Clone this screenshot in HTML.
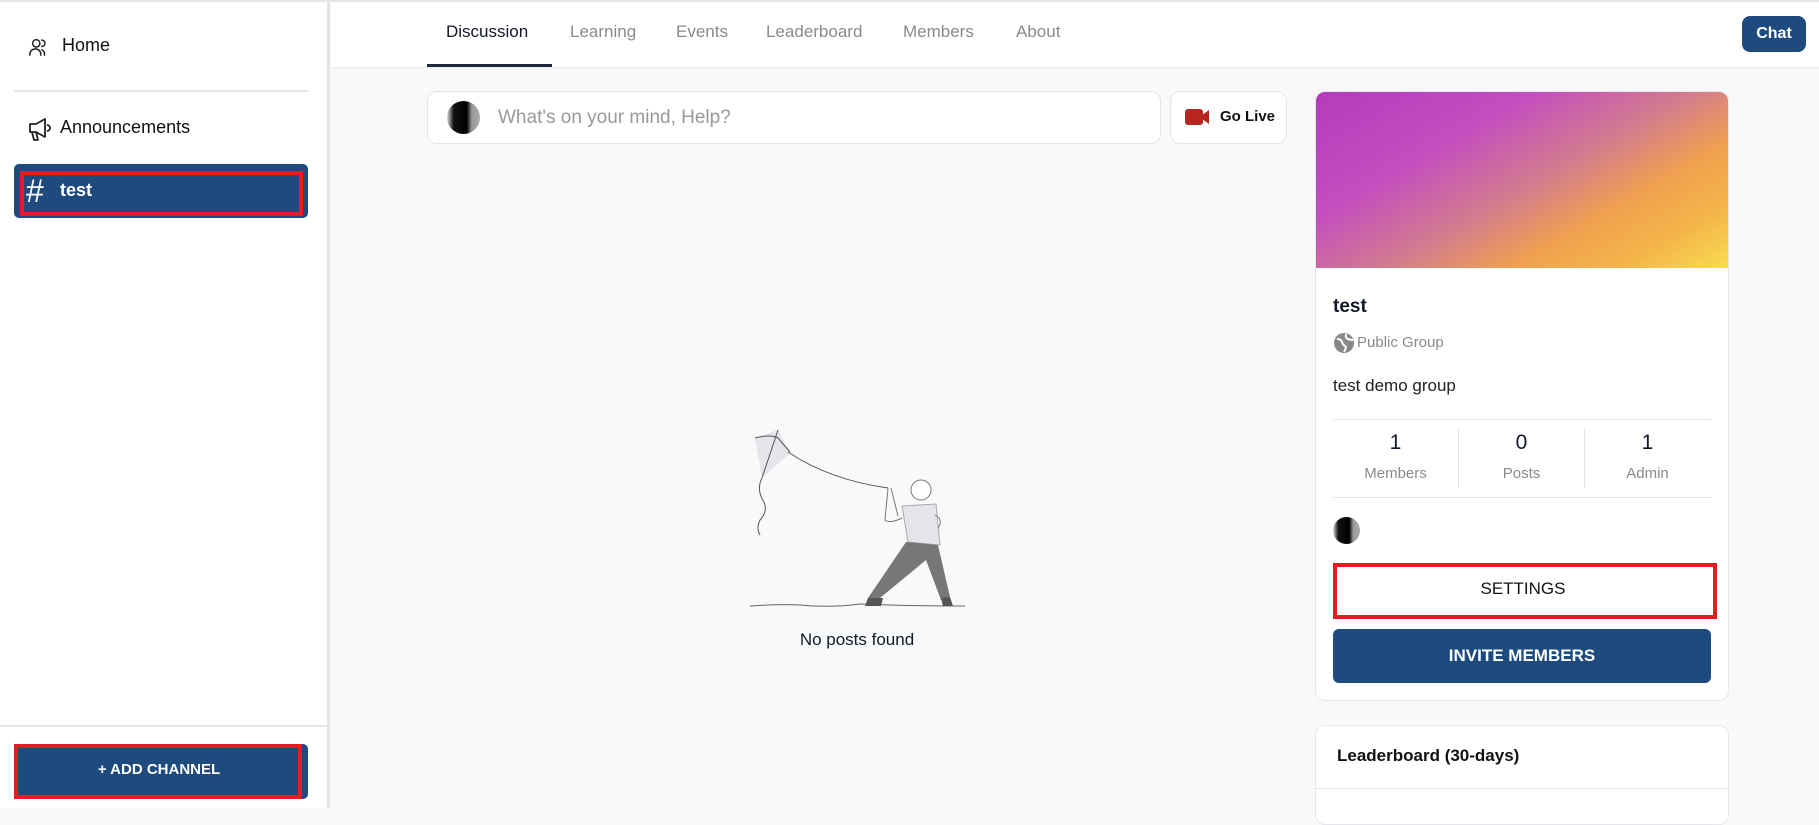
<!DOCTYPE html>
<html><head><meta charset="utf-8"><style>
*{box-sizing:border-box;margin:0;padding:0}
body{width:1819px;height:808px;overflow:hidden;background:#f8f9fb;font-family:"Liberation Sans",Arial,sans-serif;position:relative;color:#1f2937}
.a{position:absolute}
</style></head><body>
<!-- sidebar -->
<div class="a" style="left:0;top:0;width:327px;height:808px;background:#fff;border-top:2px solid #e5e5e5"></div>
<div class="a" style="left:327px;top:0;width:3px;height:808px;background:#e6e6e6"></div>
<svg class="a" style="left:28px;top:36px" width="22" height="22" viewBox="0 0 24 24" fill="none" stroke="#222" stroke-width="1.6" stroke-linecap="round"><circle cx="9" cy="8" r="4"/><path d="M2 21v-1a6 6 0 0 1 12 0v1"/><path d="M15 4.5a3.5 3.5 0 0 1 0 7M18 21v-1a5.5 5.5 0 0 0-3-5"/></svg>
<div class="a" style="left:62px;top:35px;font-size:18px;color:#111">Home</div>
<div class="a" style="left:14px;top:90px;width:294px;height:2px;background:#e5e5e5"></div>
<svg class="a" style="left:27px;top:117px" width="26" height="25" viewBox="0 0 26 25" fill="none" stroke="#222" stroke-width="1.8" stroke-linejoin="round"><path d="M3 7h6l9-5v18l-9-5H3z"/><path d="M5 15l2 8h4l-2-8"/><path d="M20 8a3 3 0 0 1 0 6"/></svg>
<div class="a" style="left:60px;top:117px;font-size:18px;color:#111">Announcements</div>
<div class="a" style="left:14px;top:164px;width:294px;height:54px;background:#1e4a7e;border-radius:5px"></div>
<div class="a" style="left:20px;top:171px;width:283px;height:45px;border:4px solid #e21d23"></div>
<div class="a" style="left:26px;top:173px;font-size:32px;color:#fff;font-weight:300;line-height:36px">#</div>
<div class="a" style="left:60px;top:180px;font-size:18px;color:#fff;font-weight:bold">test</div>
<div class="a" style="left:0;top:725px;width:327px;height:2px;background:#e5e5e5"></div>
<div class="a" style="left:14px;top:744px;width:294px;height:55px;background:#1e4a7e;border-radius:5px"></div>
<div class="a" style="left:14px;top:744px;width:288px;height:55px;border:4px solid #e21d23"></div>
<div class="a" style="left:14px;top:761px;width:290px;text-align:center;font-size:15px;color:#fff;font-weight:bold">+ ADD CHANNEL</div>
<!-- topbar -->
<div class="a" style="left:330px;top:0;width:1489px;height:67px;background:#fff;border-top:2px solid #e5e5e5;box-shadow:0 1px 3px rgba(0,0,0,.08)"></div>
<div class="a" style="left:446px;top:22px;font-size:17px;color:#111827">Discussion</div>
<div class="a" style="left:427px;top:64px;width:125px;height:3px;background:#1e293b"></div>
<div class="a" style="left:570px;top:22px;font-size:17px;color:#8a8a8a">Learning</div>
<div class="a" style="left:676px;top:22px;font-size:17px;color:#8a8a8a">Events</div>
<div class="a" style="left:766px;top:22px;font-size:17px;color:#8a8a8a">Leaderboard</div>
<div class="a" style="left:903px;top:22px;font-size:17px;color:#8a8a8a">Members</div>
<div class="a" style="left:1016px;top:22px;font-size:17px;color:#8a8a8a">About</div>
<div class="a" style="left:1742px;top:16px;width:64px;height:36px;background:#1e4a7e;border-radius:8px;color:#fff;font-weight:bold;font-size:16px;text-align:center;line-height:36px">Chat</div>
<!-- post box -->
<div class="a" style="left:427px;top:91px;width:734px;height:53px;background:#fff;border:1px solid #e3e5e8;border-radius:10px"></div>
<div class="a" style="left:447px;top:101px;width:33px;height:33px;border-radius:50%;background:linear-gradient(90deg,#ddd 0,#111 20%,#000 60%,#999 75%,#aaa)"></div>
<div class="a" style="left:498px;top:107px;font-size:19px;color:#999">What's on your mind, Help?</div>
<div class="a" style="left:1170px;top:91px;width:117px;height:53px;background:#fff;border:1px solid #e3e5e8;border-radius:10px"></div>
<svg class="a" style="left:1185px;top:108px" width="25" height="18" viewBox="0 0 25 18"><rect x="0" y="1" width="18" height="16" rx="3" fill="#b5261e"/><path d="M17 7l7-5v14l-7-5z" fill="#b5261e"/></svg>
<div class="a" style="left:1220px;top:108px;font-size:15px;color:#111;font-weight:bold">Go Live</div>
<!-- illustration -->
<svg class="a" style="left:740px;top:420px" width="240" height="200" viewBox="0 0 240 200" fill="none" stroke="#555" stroke-width="1">
<path d="M15 18L38 10L50 33L22 58Z" fill="#e3e5e8" stroke="none"/>
<path d="M15 18Q30 14 38 18L50 32M38 10L22 58"/>
<path d="M48 32Q90 60 148 68"/>
<path d="M22 58Q16 70 24 82Q28 92 20 100Q16 108 20 115"/>
<path d="M10 186Q40 184 60 185Q90 188 120 184Q170 186 225 186" stroke="#666"/>
<path d="M162 86L196 84L200 125L168 122Z" fill="#e3e5e8" stroke="#aaa"/>
<circle cx="181" cy="70" r="10" fill="#fff" stroke="#777"/>
<path d="M166 122L198 125L210 177L201 180L186 140L140 178L128 178Z" fill="#777" stroke="none"/>
<path d="M128 178L143 178L141 186L125 186Z M201 178L210 177L213 186L203 186Z" fill="#555" stroke="none"/>
<path d="M148 68L145 100Q150 104 162 98M151 68L158 96M195 95Q204 100 198 108" stroke="#777"/>
</svg>
<div class="a" style="left:757px;top:630px;width:200px;text-align:center;font-size:17px;color:#111827">No posts found</div>
<!-- right card -->
<div class="a" style="left:1315px;top:91px;width:414px;height:610px;background:#fff;border:1px solid #e6e7ea;border-radius:10px;overflow:hidden">
<div style="height:176px;background:linear-gradient(150deg,#b53bbb 0%,#c44dc0 30%,#d27b8f 52%,#f0a14e 70%,#f4b54a 85%,#f8dc50 100%)"></div>
</div>
<div class="a" style="left:1333px;top:296px;font-size:19px;color:#111827;font-weight:bold">test</div>
<svg class="a" style="left:1333px;top:332px" width="22" height="22" viewBox="0 0 22 22"><circle cx="11" cy="11" r="10" fill="#888"/><path d="M4 7q4 0 5 3t3 4-1 6M13 2q-1 4 2 5t5 1" stroke="#fff" stroke-width="2" fill="none"/></svg>
<div class="a" style="left:1357px;top:334px;font-size:15px;color:#8a8a8a">Public Group</div>
<div class="a" style="left:1333px;top:376px;font-size:17px;color:#222">test demo group</div>
<div class="a" style="left:1333px;top:419px;width:378px;height:1px;background:#e3e3e3"></div>
<div class="a" style="left:1458px;top:429px;width:1px;height:59px;background:#e3e3e3"></div>
<div class="a" style="left:1584px;top:429px;width:1px;height:59px;background:#e3e3e3"></div>
<div class="a" style="left:1333px;top:431px;width:125px;text-align:center;font-size:21px;color:#111827">1</div>
<div class="a" style="left:1459px;top:431px;width:125px;text-align:center;font-size:21px;color:#111827">0</div>
<div class="a" style="left:1585px;top:431px;width:125px;text-align:center;font-size:21px;color:#111827">1</div>
<div class="a" style="left:1333px;top:465px;width:125px;text-align:center;font-size:15px;color:#8a8a8a">Members</div>
<div class="a" style="left:1459px;top:465px;width:125px;text-align:center;font-size:15px;color:#8a8a8a">Posts</div>
<div class="a" style="left:1585px;top:465px;width:125px;text-align:center;font-size:15px;color:#8a8a8a">Admin</div>
<div class="a" style="left:1333px;top:497px;width:378px;height:1px;background:#e3e3e3"></div>
<div class="a" style="left:1333px;top:517px;width:27px;height:27px;border-radius:50%;background:linear-gradient(90deg,#ddd 0,#111 20%,#000 60%,#999 75%,#aaa)"></div>
<div class="a" style="left:1333px;top:563px;width:384px;height:56px;background:#fff;border:4px solid #e21d23"></div>
<div class="a" style="left:1333px;top:579px;width:380px;text-align:center;font-size:17px;color:#111">SETTINGS</div>
<div class="a" style="left:1333px;top:629px;width:378px;height:54px;background:#1e4a7e;border-radius:6px;color:#fff;font-weight:bold;font-size:17px;text-align:center;line-height:54px">INVITE MEMBERS</div>
<!-- leaderboard -->
<div class="a" style="left:1315px;top:725px;width:414px;height:100px;background:#fff;border:1px solid #e6e7ea;border-radius:10px"></div>
<div class="a" style="left:1337px;top:746px;font-size:17px;color:#111;font-weight:bold">Leaderboard (30-days)</div>
<div class="a" style="left:1315px;top:788px;width:414px;height:1px;background:#e3e3e3"></div>
</body></html>
